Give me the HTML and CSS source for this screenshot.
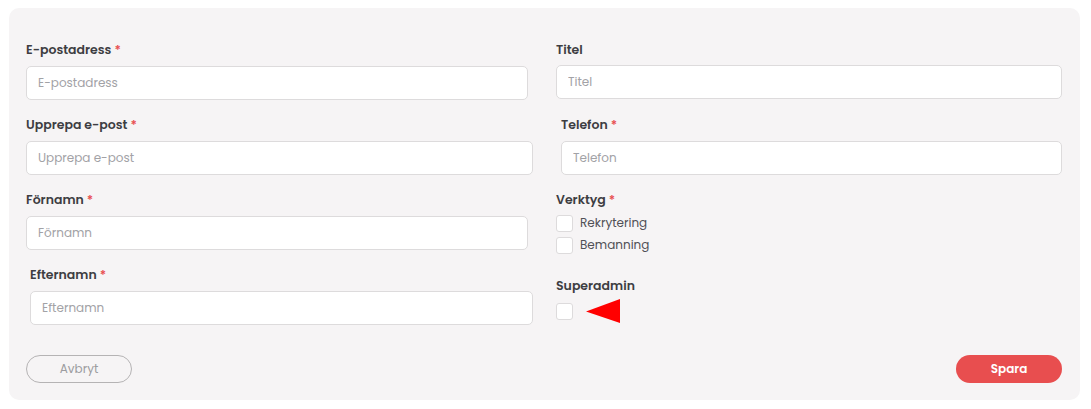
FILE: index.html
```html
<!DOCTYPE html>
<html lang="sv">
<head>
<meta charset="utf-8">
<title>Användare</title>
<link rel="stylesheet" href="styles.css">
</head>
<body>
<form class="card">
  <div class="columns">
    <div class="col">
      <div class="field">
        <label class="label">E-postadress <span class="req">*</span></label>
        <input class="input" type="text" placeholder="E-postadress">
      </div>
      <div class="field field--wide">
        <label class="label">Upprepa e-post <span class="req">*</span></label>
        <input class="input" type="text" placeholder="Upprepa e-post">
      </div>
      <div class="field">
        <label class="label">Förnamn <span class="req">*</span></label>
        <input class="input" type="text" placeholder="Förnamn">
      </div>
      <div class="field field--shift">
        <label class="label">Efternamn <span class="req">*</span></label>
        <input class="input" type="text" placeholder="Efternamn">
      </div>
    </div>
    <div class="col">
      <div class="field field--up">
        <label class="label">Titel</label>
        <input class="input" type="text" placeholder="Titel">
      </div>
      <div class="field field--inset">
        <label class="label">Telefon <span class="req">*</span></label>
        <input class="input" type="text" placeholder="Telefon">
      </div>
      <div class="group">
        <div class="label">Verktyg <span class="req">*</span></div>
        <label class="check"><span class="box"></span>Rekrytering</label>
        <label class="check"><span class="box"></span>Bemanning</label>
      </div>
      <div class="group group--admin">
        <div class="label">Superadmin</div>
        <div class="admin-row">
          <span class="box"></span>
          <svg class="pointer" width="34" height="24" viewBox="0 0 34 24"><polygon points="0,12.5 34,0 34,24" fill="#ff0000"/></svg>
        </div>
      </div>
    </div>
  </div>
  <div class="actions">
    <button type="button" class="btn btn--ghost">Avbryt</button>
    <button type="submit" class="btn btn--primary">Spara</button>
  </div>
</form>
</body>
</html>
```
FILE: styles.css
```css
* { box-sizing: border-box; }
html, body { margin: 0; padding: 0; background: #ffffff; }
body {
  font-family: "Poppins", "Open Sans", "Noto Sans", sans-serif;
  color: #3d3d42;
  padding: 8px 11px 9px 9px;
}
.card {
  background: #f6f4f5;
  border-radius: 10px;
  padding: 32px 18px 17px 17px;
  height: 392px;
  display: flex;
  flex-direction: column;
}
.columns {
  display: grid;
  grid-template-columns: 502px 506px;
  column-gap: 28px;
}
.col { display: flex; flex-direction: column; }
.field { display: flex; flex-direction: column; margin-bottom: 15px; }
.field--wide { margin-right: -5px; }
.field--shift { padding-left: 4px; margin-right: -5px; }
.field--up .input { margin-top: -1px; margin-bottom: 1px; }
.field--inset { padding-left: 5px; }
.label {
  font-size: 12.5px;
  font-weight: 600;
  line-height: 20px;
  height: 20px;
  color: #3d3d42;
  margin-bottom: 6px;
}
.req { color: #e84e4f; }
.input {
  height: 34px;
  border: 1px solid #dddbdc;
  border-radius: 5px;
  background: #ffffff;
  padding: 0 11px;
  font-family: inherit;
  font-size: 12px;
  color: #3d3d42;
  width: 100%;
}
.input::placeholder { color: #a2a2a6; }
.group { display: flex; flex-direction: column; }
.group .label { margin-bottom: 5px; }
.check {
  display: flex;
  align-items: center;
  gap: 7px;
  height: 16px;
  margin-bottom: 6px;
  font-size: 12px;
  color: #505056;
}
.box {
  width: 17px;
  height: 17px;
  flex: none;
  background: #ffffff;
  border: 1px solid #dddbdc;
  border-radius: 3px;
}
.group--admin { margin-top: 17px; }
.group--admin .label { margin-bottom: 4px; }
.admin-row { display: flex; align-items: center; gap: 13px; }
.pointer { display: block; margin-top: -1px; }
.actions {
  margin-top: auto;
  display: flex;
  justify-content: space-between;
  align-items: center;
}
.btn {
  height: 28px;
  border-radius: 14px;
  font-family: inherit;
  font-size: 12px;
  cursor: pointer;
}
.btn--ghost {
  width: 106px;
  background: transparent;
  border: 1px solid #b5b3b4;
  color: #9c9ca0;
}
.btn--primary {
  width: 106px;
  background: #e84e4f;
  border: none;
  color: #ffffff;
  font-weight: 600;
}
```
